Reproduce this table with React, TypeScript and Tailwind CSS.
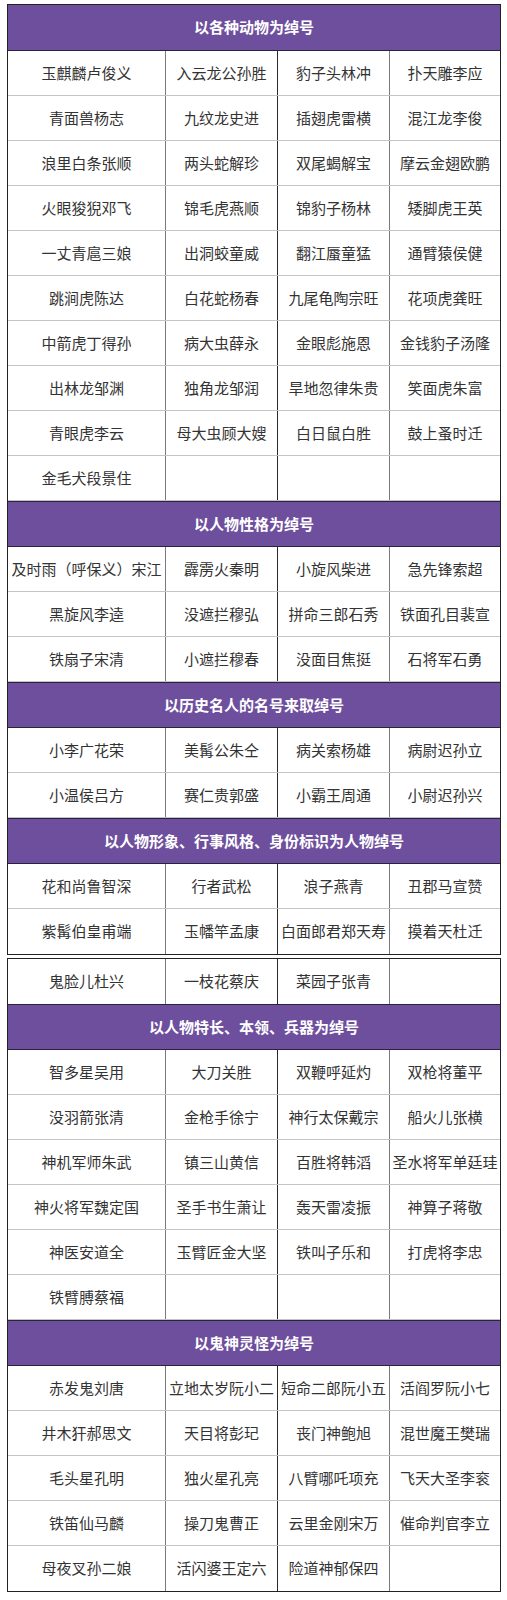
import React from "react";

type Section = { title: string; rows: string[][] };

const table1: Section[] = [
  {
    title: "以各种动物为绰号",
    rows: [
      ["玉麒麟卢俊义", "入云龙公孙胜", "豹子头林冲", "扑天雕李应"],
      ["青面兽杨志", "九纹龙史进", "插翅虎雷横", "混江龙李俊"],
      ["浪里白条张顺", "两头蛇解珍", "双尾蝎解宝", "摩云金翅欧鹏"],
      ["火眼狻猊邓飞", "锦毛虎燕顺", "锦豹子杨林", "矮脚虎王英"],
      ["一丈青扈三娘", "出洞蛟童威", "翻江蜃童猛", "通臂猿侯健"],
      ["跳涧虎陈达", "白花蛇杨春", "九尾龟陶宗旺", "花项虎龚旺"],
      ["中箭虎丁得孙", "病大虫薛永", "金眼彪施恩", "金钱豹子汤隆"],
      ["出林龙邹渊", "独角龙邹润", "旱地忽律朱贵", "笑面虎朱富"],
      ["青眼虎李云", "母大虫顾大嫂", "白日鼠白胜", "鼓上蚤时迁"],
      ["金毛犬段景住", "", "", ""],
    ],
  },
  {
    title: "以人物性格为绰号",
    rows: [
      ["及时雨（呼保义）宋江", "霹雳火秦明", "小旋风柴进", "急先锋索超"],
      ["黑旋风李逵", "没遮拦穆弘", "拼命三郎石秀", "铁面孔目裴宣"],
      ["铁扇子宋清", "小遮拦穆春", "没面目焦挺", "石将军石勇"],
    ],
  },
  {
    title: "以历史名人的名号来取绰号",
    rows: [
      ["小李广花荣", "美髯公朱仝", "病关索杨雄", "病尉迟孙立"],
      ["小温侯吕方", "赛仁贵郭盛", "小霸王周通", "小尉迟孙兴"],
    ],
  },
  {
    title: "以人物形象、行事风格、身份标识为人物绰号",
    rows: [
      ["花和尚鲁智深", "行者武松", "浪子燕青", "丑郡马宣赞"],
      ["紫髯伯皇甫端", "玉幡竿孟康", "白面郎君郑天寿", "摸着天杜迁"],
    ],
  },
];

const table2: (Section | string[])[] = [
  ["鬼脸儿杜兴", "一枝花蔡庆", "菜园子张青", ""],
  {
    title: "以人物特长、本领、兵器为绰号",
    rows: [
      ["智多星吴用", "大刀关胜", "双鞭呼延灼", "双枪将董平"],
      ["没羽箭张清", "金枪手徐宁", "神行太保戴宗", "船火儿张横"],
      ["神机军师朱武", "镇三山黄信", "百胜将韩滔", "圣水将军单廷珪"],
      ["神火将军魏定国", "圣手书生萧让", "轰天雷凌振", "神算子蒋敬"],
      ["神医安道全", "玉臂匠金大坚", "铁叫子乐和", "打虎将李忠"],
      ["铁臂膊蔡福", "", "", ""],
    ],
  },
  {
    title: "以鬼神灵怪为绰号",
    rows: [
      ["赤发鬼刘唐", "立地太岁阮小二", "短命二郎阮小五", "活阎罗阮小七"],
      ["井木犴郝思文", "天目将彭玘", "丧门神鲍旭", "混世魔王樊瑞"],
      ["毛头星孔明", "独火星孔亮", "八臂哪吒项充", "飞天大圣李衮"],
      ["铁笛仙马麟", "操刀鬼曹正", "云里金刚宋万", "催命判官李立"],
      ["母夜叉孙二娘", "活闪婆王定六", "险道神郁保四", ""],
    ],
  },
];

function Row({ cells, last }: { cells: string[]; last?: boolean }) {
  return (
    <div
      className={`grid grid-cols-[158px_112px_112px_110px] h-[45px] ${
        last ? "" : "border-b border-[#c4c4c4]"
      }`}
    >
      <div className="flex items-center justify-center border-r border-[#7a7a7a] whitespace-nowrap">
        {cells[0]}
      </div>
      <div className="flex items-center justify-center border-r border-[#2a2a2a] whitespace-nowrap">
        {cells[1]}
      </div>
      <div className="flex items-center justify-center border-r border-[#7a7a7a] whitespace-nowrap">
        {cells[2]}
      </div>
      <div className="flex items-center justify-center whitespace-nowrap">{cells[3]}</div>
    </div>
  );
}

function Header({ title, first }: { title: string; first?: boolean }) {
  return (
    <div
      className={`flex items-center justify-center bg-[#6e4f9e] text-white font-bold h-[46px] border-b border-[#2a2340] ${
        first ? "" : "border-t border-t-[#2a2340]"
      }`}
    >
      {title}
    </div>
  );
}

export default function App() {
  const font = {
    fontFamily: '"Noto Sans CJK SC", "Noto Sans", sans-serif',
  };
  return (
    <div
      className="bg-white w-[507px] pl-[7px] pt-[4px] pb-[9px] text-[15px] text-[#333333]"
      style={font}
    >
      <div className="w-[494px] border border-[#222222]">
        {table1.map((s, si) => (
          <div key={si}>
            <Header title={s.title} first={si === 0} />
            {s.rows.map((r, ri) => (
              <Row
                key={ri}
                cells={r}
                last={si === table1.length - 1 && ri === s.rows.length - 1}
              />
            ))}
          </div>
        ))}
      </div>
      <div className="w-[494px] border border-[#222222] mt-[3px]">
        {table2.map((s, si) => {
          if (Array.isArray(s)) {
            return <Row key={si} cells={s} last />;
          }
          return (
            <div key={si}>
              <Header title={s.title} />
              {s.rows.map((r, ri) => (
                <Row
                  key={ri}
                  cells={r}
                  last={si === table2.length - 1 && ri === s.rows.length - 1}
                />
              ))}
            </div>
          );
        })}
      </div>
    </div>
  );
}
